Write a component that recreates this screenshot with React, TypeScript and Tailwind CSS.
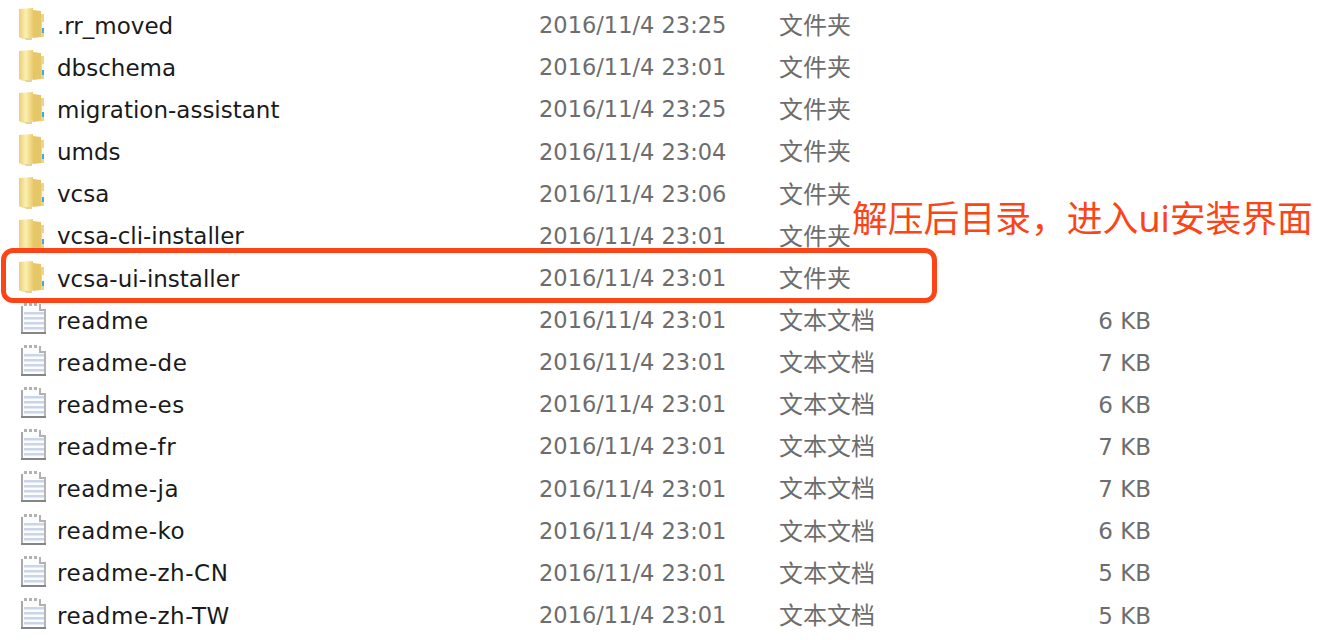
const files = [
  { name: ".rr_moved", date: "2016/11/4 23:25", kind: "文件夹", size: "" },
  { name: "dbschema", date: "2016/11/4 23:01", kind: "文件夹", size: "" },
  { name: "migration-assistant", date: "2016/11/4 23:25", kind: "文件夹", size: "" },
  { name: "umds", date: "2016/11/4 23:04", kind: "文件夹", size: "" },
  { name: "vcsa", date: "2016/11/4 23:06", kind: "文件夹", size: "" },
  { name: "vcsa-cli-installer", date: "2016/11/4 23:01", kind: "文件夹", size: "" },
  { name: "vcsa-ui-installer", date: "2016/11/4 23:01", kind: "文件夹", size: "" },
  { name: "readme", date: "2016/11/4 23:01", kind: "文本文档", size: "6 KB" },
  { name: "readme-de", date: "2016/11/4 23:01", kind: "文本文档", size: "7 KB" },
  { name: "readme-es", date: "2016/11/4 23:01", kind: "文本文档", size: "6 KB" },
  { name: "readme-fr", date: "2016/11/4 23:01", kind: "文本文档", size: "7 KB" },
  { name: "readme-ja", date: "2016/11/4 23:01", kind: "文本文档", size: "7 KB" },
  { name: "readme-ko", date: "2016/11/4 23:01", kind: "文本文档", size: "6 KB" },
  { name: "readme-zh-CN", date: "2016/11/4 23:01", kind: "文本文档", size: "5 KB" },
  { name: "readme-zh-TW", date: "2016/11/4 23:01", kind: "文本文档", size: "5 KB" },
];

function FolderIcon() {
  return (
    <svg width="28" height="32" viewBox="0 0 28 32" className="mb-[2px] shrink-0">
      <defs>
        <linearGradient id="folderFront" x1="0" x2="1" y1="0" y2="0">
          <stop offset="0" stopColor="#e9cd7a" />
          <stop offset="0.45" stopColor="#fbf0b0" />
          <stop offset="0.7" stopColor="#f3dc8c" />
          <stop offset="1" stopColor="#e8c868" />
        </linearGradient>
      </defs>
      <path d="M22 6h4v23h-4z" fill="#eed48a" />
      <path d="M24 14h2v6h-2z" fill="#f8f8f2" />
      <path d="M24 20h2v5h-2z" fill="#45a9d6" />
      <path d="M1 1l14-1 1 29-5 2H5l-4-2z" fill="url(#folderFront)" />
      <path d="M15 2l8 1v26l-8 1z" fill="#e6c768" />
      <path d="M6 30h8v2H8z" fill="#e3d49e" />
    </svg>
  );
}

function DocIcon() {
  return (
    <svg width="28" height="32" viewBox="0 0 28 32" className="mb-[2px] shrink-0">
      <path d="M4 2h18l5 5v22H4z" fill="#fbfcfe" />
      <path d="M3 3h2v27H3z" fill="#a8a8a8" />
      <path d="M26 7h2v23h-2z" fill="#b5b5b5" />
      <path d="M3 29h25v2H3z" fill="#858585" />
      <path d="M6 9h20v2.500H6zM6 14h20v2.500H6zM6 19h20v2.500H6zM6 24h20v2.500H6z" fill="#ccd5e8" />
      <path d="M6 0h3v3H6zM11 0h3v3h-3zM16 0h3v3h-3zM21 1h2v5h5v2h-7z" fill="#b2b2b2" />
    </svg>
  );
}

export default function App() {
  return (
    <div className="relative w-[1328px] h-[640px] overflow-hidden bg-white pt-1 font-['DejaVu_Sans','Noto_Sans_CJK_SC',sans-serif] text-[23px]">
      {files.map((f) => (
        <div key={f.name} className="flex h-[42.14px] items-center">
          <div className="flex w-[57px] shrink-0 justify-start pl-[18px]">
            {f.size ? <DocIcon /> : <FolderIcon />}
          </div>
          <div className={f.size ? "w-[482px] shrink-0 pt-[2px] tracking-[0.55px] text-[#1a1a1a]" : "w-[482px] shrink-0 pt-[2px] text-[#1a1a1a]"}>{f.name}</div>
          <div className="w-[240px] shrink-0 pt-[2px] text-[22.5px] text-[#6d6d6d]">{f.date}</div>
          <div className="w-[200px] shrink-0 pt-[2px] text-[24px] text-[#6d6d6d]">{f.kind}</div>
          <div className="w-[172px] shrink-0 pt-[2px] text-right text-[#6d6d6d]">{f.size}</div>
        </div>
      ))}

      {/* annotation over the list */}
      <div className="absolute left-[1px] top-[248px] h-[55px] w-[936px] rounded-[12px] border-[5px] border-[#fc4419]" />
      <div className="absolute left-[852px] top-[194px] whitespace-nowrap font-['Noto_Sans','Noto_Sans_CJK_SC',sans-serif] text-[35.8px] leading-[48px] text-[#fc4419]">
        解压后目录，进入ui安装界面
      </div>
    </div>
  );
}
